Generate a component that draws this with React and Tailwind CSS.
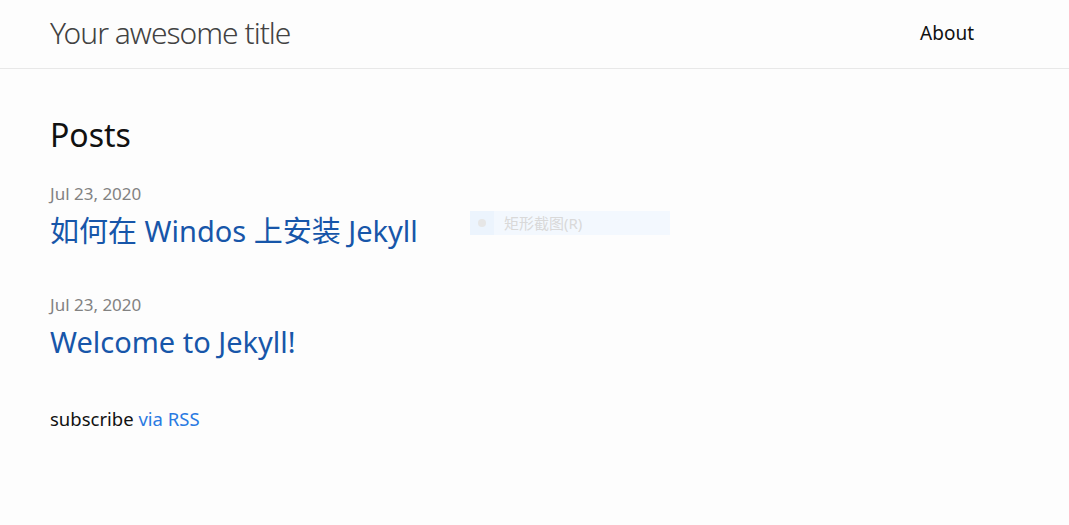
const posts = [
  { date: 'Jul 23, 2020', title: '如何在 Windos 上安装 Jekyll' },
  { date: 'Jul 23, 2020', title: 'Welcome to Jekyll!' },
];

export default function App() {
  return (
    <div
      className="relative min-h-[525px] bg-[#fdfdfd] text-[#111111]"
      style={{ fontFamily: '"Noto Sans", "Noto Sans CJK SC", sans-serif' }}
    >
      {/* Header */}
      <header className="h-[69px] border-b border-[#e8e8e8]">
        <div className="flex items-start justify-between pl-[50px] pr-[95px]">
          <a className="pt-[6px] text-[30px] leading-[54px] font-light tracking-[-1px] text-[#424242]">
            Your awesome title
          </a>
          <nav className="pt-[19px]">
            <a className="text-[19px] leading-[28px] text-[#111111]">About</a>
          </nav>
        </div>
      </header>

      {/* Content */}
      <main className="pl-[50px] pt-[46px]">
        <h2 className="text-[32px] leading-[40px] font-normal">Posts</h2>

        <ul className="mt-[27px]">
          {posts.map((post, i) => (
            <li key={i} className={i > 0 ? 'mt-[44px]' : ''}>
              <span className="block text-[17px] leading-[24px] text-[#828282]">{post.date}</span>
              <h3 className="mt-[7px] text-[29px] leading-[36px] font-normal">
                <a className="text-[#1756a9]">{post.title}</a>
              </h3>
            </li>
          ))}
        </ul>

        <p className="mt-[45px] text-[18.5px] leading-[28px]">
          subscribe <a className="text-[#2a7ae2]">via RSS</a>
        </p>
      </main>

      {/* ghost context-menu item */}
      <div className="absolute left-[470px] top-[211px] flex h-[24px] w-[200px] items-center bg-[#f3f8fe]">
        <div className="flex h-full w-[24px] items-center justify-center bg-[#ecf4fd]">
          <div className="h-[8px] w-[8px] rounded-full bg-[#e6e6e6]" />
        </div>
        <span className="ml-[10px] text-[15px] leading-none text-[#d9d9d9]">矩形截图(R)</span>
      </div>
    </div>
  );
}
